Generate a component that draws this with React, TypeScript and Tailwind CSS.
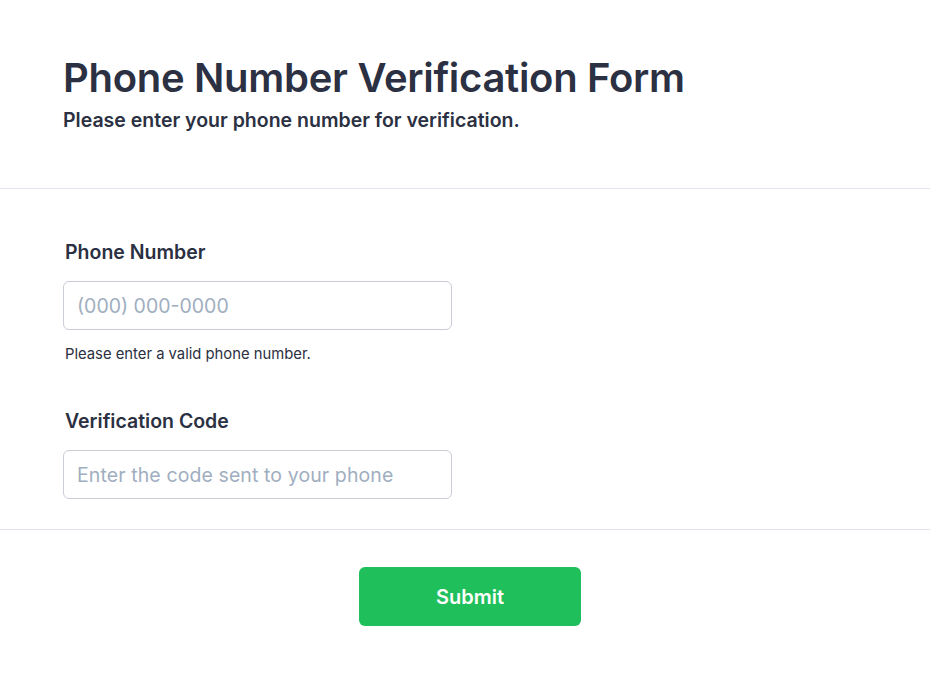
import React, { useState } from "react";

const font = { fontFamily: "Inter, 'Noto Sans', sans-serif" };

export default function App() {
  const [phone, setPhone] = useState("");
  const [code, setCode] = useState("");

  return (
    <div className="min-h-screen bg-white text-[#2b3042]" style={font}>
      {/* Header */}
      <div className="px-[63px] pt-[52px] pb-[54px] border-b border-[#e2e4ee]">
        <h1 className="text-[40px] leading-[52px] font-semibold tracking-[-0.3px]">
          Phone Number Verification Form
        </h1>
        <p className="mt-[2px] text-[19.5px] leading-[28px] font-semibold">
          Please enter your phone number for verification.
        </p>
      </div>

      {/* Fields */}
      <div className="px-[63px] pt-[49px] pb-[30px] border-b border-[#e2e4ee]">
        <div>
          <label className="block pl-[2px] text-[19.5px] leading-[28px] font-semibold">
            Phone Number
          </label>
          <input
            type="tel"
            value={phone}
            onChange={(e) => setPhone(e.target.value)}
            placeholder="(000) 000-0000"
            className="mt-[15px] block w-[389px] h-[49px] px-[13px] rounded-md border border-[#c9cdd6] text-[19.5px] placeholder:text-[#a0aec0] outline-none"
          />
          <p className="mt-[14px] pl-[2px] text-[14.8px] leading-[20px]">
            Please enter a valid phone number.
          </p>
        </div>

        <div className="mt-[43px]">
          <label className="block pl-[2px] text-[19.5px] leading-[28px] font-semibold">
            Verification Code
          </label>
          <input
            type="text"
            value={code}
            onChange={(e) => setCode(e.target.value)}
            placeholder="Enter the code sent to your phone"
            className="mt-[15px] block w-[389px] h-[49px] px-[13px] rounded-md border border-[#c9cdd6] text-[19.5px] tracking-[0.1px] placeholder:text-[#a0aec0] outline-none"
          />
        </div>
      </div>

      {/* Footer */}
      <div className="flex justify-center pl-[10px] pt-[37px] pb-[50px]">
        <button className="w-[222px] h-[59px] rounded-md bg-[#1fbf5c] text-white text-[20px] font-semibold">
          Submit
        </button>
      </div>
    </div>
  );
}
